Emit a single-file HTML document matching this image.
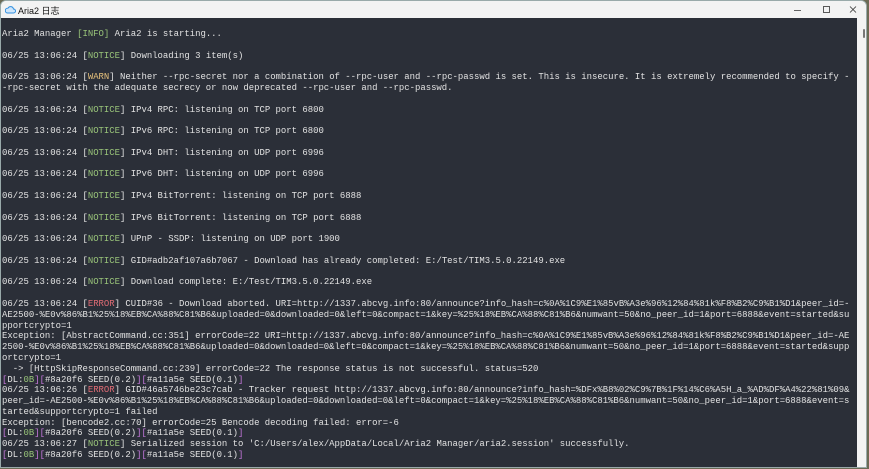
<!DOCTYPE html>
<html><head><meta charset="utf-8"><style>
html,body{margin:0;padding:0;width:869px;height:469px;overflow:hidden;background:#6b6a55;}
.win{position:absolute;left:0;top:0;width:867px;height:468px;background:#f3f3f3;border:1px solid #9aa;box-sizing:border-box;border-radius:6px 6px 0 0;overflow:hidden}
.tb{position:absolute;left:0;top:0;width:100%;height:17px;background:#f3f3f3;font:9px "Liberation Sans","Noto Sans CJK SC",sans-serif;color:#111}
.tb .t{position:absolute;left:17px;top:3px}
.tb svg{position:absolute}
.con{position:absolute;left:0;top:17px;width:856px;height:451px;background:#2b2f38;overflow:hidden}
pre{margin:0;padding:11px 0 0 1px;font:8.95px/10.8px "Liberation Mono",monospace;color:#e2e2e2;white-space:pre}
.g{color:#98c379}.y{color:#e5c07b}.r{color:#e06c75}.m{color:#c678dd}
.sb{position:absolute;left:856px;top:17px;width:11px;height:451px;background:#f3f3f3}
.th{position:absolute;left:6px;top:11px;width:2px;height:9px;background:#777;border-radius:1px}
</style></head><body>
<div class="win">
<div class="tb">
<svg style="left:4px;top:4px" width="11" height="9" viewBox="0 0 11 9"><path d="M2.5 8h6a2 2 0 0 0 0-4 3 3 0 0 0-5.6-.8A2.4 2.4 0 0 0 2.5 8z" fill="#cfe6fb" stroke="#2f8fe0" stroke-width="1"/></svg>
<span class="t">Aria2 日志</span>
<svg style="left:793px;top:4px" width="70" height="10" viewBox="0 0 70 10"><path d="M0 5.5h7" stroke="#333" stroke-width="0.8"/><rect x="29.5" y="1.5" width="6" height="6" fill="none" stroke="#333" stroke-width="0.8"/><path d="M56 1.5l6 6M62 1.5l-6 6" stroke="#333" stroke-width="0.8"/></svg>
</div>
<div class="con"><pre>Aria2 Manager <span class="g">[INFO]</span> Aria2 is starting...

06/25 13:06:24 [<span class="g">NOTICE</span>] Downloading 3 item(s)

06/25 13:06:24 [<span class="y">WARN</span>] Neither --rpc-secret nor a combination of --rpc-user and --rpc-passwd is set. This is insecure. It is extremely recommended to specify -
-rpc-secret with the adequate secrecy or now deprecated --rpc-user and --rpc-passwd.

06/25 13:06:24 [<span class="g">NOTICE</span>] IPv4 RPC: listening on TCP port 6800

06/25 13:06:24 [<span class="g">NOTICE</span>] IPv6 RPC: listening on TCP port 6800

06/25 13:06:24 [<span class="g">NOTICE</span>] IPv4 DHT: listening on UDP port 6996

06/25 13:06:24 [<span class="g">NOTICE</span>] IPv6 DHT: listening on UDP port 6996

06/25 13:06:24 [<span class="g">NOTICE</span>] IPv4 BitTorrent: listening on TCP port 6888

06/25 13:06:24 [<span class="g">NOTICE</span>] IPv6 BitTorrent: listening on TCP port 6888

06/25 13:06:24 [<span class="g">NOTICE</span>] UPnP - SSDP: listening on UDP port 1900

06/25 13:06:24 [<span class="g">NOTICE</span>] GID#adb2af107a6b7067 - Download has already completed: E:/Test/TIM3.5.0.22149.exe

06/25 13:06:24 [<span class="g">NOTICE</span>] Download complete: E:/Test/TIM3.5.0.22149.exe

06/25 13:06:24 [<span class="r">ERROR</span>] CUID#36 - Download aborted. URI=http://1337.abcvg.info:80/announce?info_hash=c%0A%1C9%E1%85vB%A3e%96%12%84%81k%F8%B2%C9%B1%D1&amp;peer_id=-
AE2500-%E0v%86%B1%25%18%EB%CA%88%C81%B6&amp;uploaded=0&amp;downloaded=0&amp;left=0&amp;compact=1&amp;key=%25%18%EB%CA%88%C81%B6&amp;numwant=50&amp;no_peer_id=1&amp;port=6888&amp;event=started&amp;su
pportcrypto=1
Exception: [AbstractCommand.cc:351] errorCode=22 URI=http://1337.abcvg.info:80/announce?info_hash=c%0A%1C9%E1%85vB%A3e%96%12%84%81k%F8%B2%C9%B1%D1&amp;peer_id=-AE
2500-%E0v%86%B1%25%18%EB%CA%88%C81%B6&amp;uploaded=0&amp;downloaded=0&amp;left=0&amp;compact=1&amp;key=%25%18%EB%CA%88%C81%B6&amp;numwant=50&amp;no_peer_id=1&amp;port=6888&amp;event=started&amp;supp
ortcrypto=1
  -&gt; [HttpSkipResponseCommand.cc:239] errorCode=22 The response status is not successful. status=520
<span class="m">[</span>DL:<span class="g">0B</span><span class="m">][</span>#8a20f6 SEED(0.2)<span class="m">][</span>#a11a5e SEED(0.1)<span class="m">]</span>
06/25 13:06:26 [<span class="r">ERROR</span>] GID#46a5746be23c7cab - Tracker request http://1337.abcvg.info:80/announce?info_hash=%DFx%B8%02%C9%7B%1F%14%C6%A5H_a_%AD%DF%A4%22%81%09&amp;
peer_id=-AE2500-%E0v%86%B1%25%18%EB%CA%88%C81%B6&amp;uploaded=0&amp;downloaded=0&amp;left=0&amp;compact=1&amp;key=%25%18%EB%CA%88%C81%B6&amp;numwant=50&amp;no_peer_id=1&amp;port=6888&amp;event=s
tarted&amp;supportcrypto=1 failed
Exception: [bencode2.cc:70] errorCode=25 Bencode decoding failed: error=-6
<span class="m">[</span>DL:<span class="g">0B</span><span class="m">][</span>#8a20f6 SEED(0.2)<span class="m">][</span>#a11a5e SEED(0.1)<span class="m">]</span>
06/25 13:06:27 [<span class="g">NOTICE</span>] Serialized session to 'C:/Users/alex/AppData/Local/Aria2 Manager/aria2.session' successfully.
<span class="m">[</span>DL:<span class="g">0B</span><span class="m">][</span>#8a20f6 SEED(0.2)<span class="m">][</span>#a11a5e SEED(0.1)<span class="m">]</span></pre></div>
<div class="sb"><div class="th"></div></div>
</div>
</body></html>
